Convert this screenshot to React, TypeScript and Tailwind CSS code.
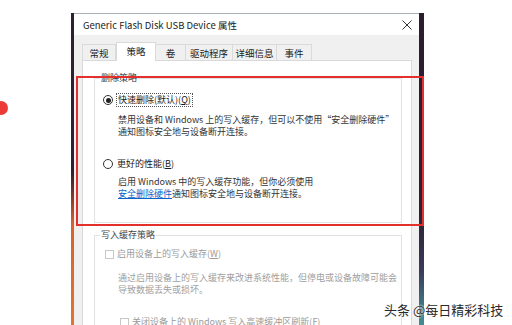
import React from "react";

const FONT = '"Noto Sans CJK SC", "Noto Sans", sans-serif';

function Tab({ label, w, selected }: { label: string; w: string; selected?: boolean }) {
  if (selected) {
    return (
      <div
        className={`relative z-10 -mb-px flex h-[19px] items-start justify-center border border-b-0 border-[#d9d9d9] bg-white pt-[2px] ${w}`}
      >
        {label}
      </div>
    );
  }
  return (
    <div
      className={`flex h-[16px] items-center justify-center border border-b-0 border-[#dadada] bg-[#f0f0f0] -ml-px first:ml-0 ${w}`}
    >
      {label}
    </div>
  );
}

function Radio({ checked }: { checked?: boolean }) {
  return (
    <div className="flex h-[10px] w-[10px] shrink-0 items-center justify-center rounded-full border border-[#333]">
      {checked && <div className="h-[5px] w-[5px] rounded-full bg-[#222]" />}
    </div>
  );
}

function Check() {
  return <div className="h-[9px] w-[9px] shrink-0 border border-[#c8c8c8] bg-white" />;
}

export default function App() {
  return (
    <div
      className="relative flex h-[325px] w-[512px] overflow-hidden whitespace-nowrap bg-white pl-[71px] pt-[13px] text-[9px] leading-[12px] text-[#1a1a1a]"
      style={{ fontFamily: FONT }}
    >
      {/* window */}
      <div className="flex h-[330px] w-[353px]">
        <div className="w-[3px] bg-[linear-gradient(to_bottom,#2c2232_0%,#2e2030_48%,#8a3a2a_56%,#d8622c_64%,#e2782e_100%)]" />
        <div className="flex flex-1 flex-col bg-[#f0f0f0]">
          {/* title bar */}
          <div className="flex h-[22px] items-center justify-between border-t border-[#a9b3b8] bg-white pl-[9px] pr-[7px]">
            <span className="text-[9.5px] text-[#222]">Generic Flash Disk USB Device 属性</span>
            <svg width="10" height="10" viewBox="0 0 10 10" className="mt-[1px]">
              <path d="M0.5 0.5 L9.5 9.5 M9.5 0.5 L0.5 9.5" stroke="#333" strokeWidth="1" />
            </svg>
          </div>
          {/* body */}
          <div className="flex flex-1 flex-col pl-[8px] pr-[7px] pt-[7px]">
            <div className="flex h-[18px] items-end text-[9.5px] text-[#222]">
              <Tab label="常规" w="w-[34px]" />
              <Tab label="策略" w="w-[40px]" selected />
              <Tab label="卷" w="w-[31px]" />
              <Tab label="驱动程序" w="w-[48px]" />
              <Tab label="详细信息" w="w-[45px]" />
              <Tab label="事件" w="w-[36px]" />
            </div>
            <div className="flex flex-1 flex-col border border-[#d9d9d9] bg-white pl-[11px] pr-[9px] pt-[11px]">
              {/* group 1 */}
              <fieldset className="h-[151px] border border-[#e2e2e2] pl-[8px]">
                <legend className="-ml-[3px] px-[1px] text-[#333]">删除策略</legend>
                <div className="mt-[9px] flex items-center gap-[3px]">
                  <Radio checked />
                  <span className="border border-dotted border-[#555] px-[1px] leading-[12px]">
                    快速删除(默认)(<span className="underline">Q</span>)
                  </span>
                </div>
                <div className="ml-[15px] mt-[7px] text-[#333]">
                  <div>禁用设备和 Windows 上的写入缓存，但可以不使用“安全删除硬件”</div>
                  <div>通知图标安全地与设备断开连接。</div>
                </div>
                <div className="mt-[20px] flex items-center gap-[4px]">
                  <Radio />
                  <span>
                    更好的性能(<span className="underline">B</span>)
                  </span>
                </div>
                <div className="ml-[15px] mt-[6px] text-[#333]">
                  <div>启用 Windows 中的写入缓存功能，但你必须使用</div>
                  <div>
                    <span className="text-[#0a64c8] underline">安全删除硬件</span>通知图标安全地与设备断开连接。
                  </div>
                </div>
              </fieldset>
              {/* group 2 */}
              <fieldset className="mt-[6px] flex-1 border border-[#e2e2e2] pl-[10px]">
                <legend className="-ml-[5px] px-[1px] text-[#444]">写入缓存策略</legend>
                <div className="mt-[7px] flex items-center gap-[3px] text-[#9a9a9a]">
                  <Check />
                  <span>
                    启用设备上的写入缓存(<span className="underline">W</span>)
                  </span>
                </div>
                <div className="ml-[13px] mt-[12px] text-[#a0a0a0]">
                  <div>通过启用设备上的写入缓存来改进系统性能，但停电或设备故障可能会</div>
                  <div>导致数据丢失或损坏。</div>
                </div>
                <div className="ml-[15px] mt-[20px] flex items-center gap-[3px] text-[#9a9a9a]">
                  <Check />
                  <span>
                    关闭设备上的 Windows 写入高速缓冲区刷新(<span className="underline">F</span>)
                  </span>
                </div>
              </fieldset>
            </div>
          </div>
        </div>
        <div className="w-[5px] bg-[linear-gradient(to_bottom,#2a1e2e_0%,#2b1f31_60%,#3a3a5a_78%,#3f7f88_90%,#4a9aa0_100%)]" />
      </div>

      {/* annotation: red dot */}
      <div className="absolute left-[-6px] top-[101px] h-[14px] w-[14px] rounded-full bg-[#ec3b36] blur-[0.6px]" />
      {/* annotation: red rectangle */}
      <div className="pointer-events-none absolute left-[76px] top-[76px] h-[150px] w-[348px] border-2 border-[#e3302c]" />
      {/* watermark */}
      <div
        className="absolute left-[384px] top-[301px] text-[13px] leading-[18px] text-[#2a2a2a]"
        style={{ textShadow: "0 0 2px #fff, 0 0 2px #fff" }}
      >
        头条 @每日精彩科技
      </div>
    </div>
  );
}
